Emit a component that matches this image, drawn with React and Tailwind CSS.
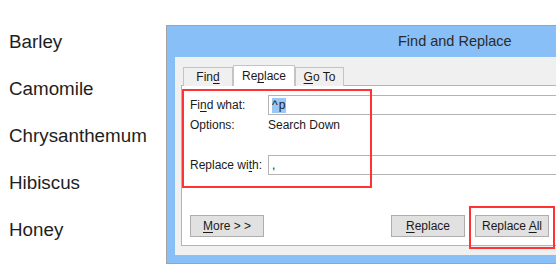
const words = ["Barley", "Camomile", "Chrysanthemum", "Hibiscus", "Honey"];

function Key({ children }) {
  return <span className="underline underline-offset-2">{children}</span>;
}

function Button({ children, className = "" }) {
  return (
    <div
      className={`h-[22px] w-[74px] flex items-center justify-center border border-[#adadad] bg-[#e1e1e1] text-[12px] text-[#1a1a1a] ${className}`}
    >
      <span>{children}</span>
    </div>
  );
}

export default function App() {
  return (
    <div
      className="relative w-[556px] h-[276px] overflow-hidden bg-white flex"
      style={{ fontFamily: '"Liberation Sans", Arial, sans-serif' }}
    >
      {/* word list */}
      <div className="w-[166px] shrink-0 pt-[18px] pl-[9px] text-[18.8px] text-[#1e1e1e]">
        {words.map((w) => (
          <div key={w} className="h-[47px] leading-[47px]">
            {w}
          </div>
        ))}
      </div>

      {/* dialog window */}
      <div className="mt-[25px] h-[239px] w-[440px] shrink-0 border border-[#a3a3a3] bg-[#88bff7] flex flex-col px-[8px] pb-[8px]">
        <div className="h-[31px] shrink-0 flex items-center pl-[223px] text-[14.5px] text-[#2b2b2b]">
          Find and Replace
        </div>

        <div className="flex-1 bg-[#f0f0f0] flex flex-col pt-[8px]">
          {/* tabs */}
          <div className="flex items-end pl-[8px] h-[21px] relative z-10 -mb-px">
            <div className="h-[19px] w-[50px] border border-[#c4c4c4] border-b-0 bg-[#f0f0f0] flex items-center justify-center text-[12px] text-[#1a1a1a]">
              <span>Fin<Key>d</Key></span>
            </div>
            <div className="h-[21px] w-[62px] border border-[#c4c4c4] border-b-0 bg-white flex items-center justify-center text-[12px] text-[#1a1a1a]">
              <span>Re<Key>p</Key>lace</span>
            </div>
            <div className="h-[19px] w-[49px] border border-[#c4c4c4] border-b-0 bg-[#f0f0f0] flex items-center justify-center text-[12px] text-[#1a1a1a]">
              <span><Key>G</Key>o To</span>
            </div>
          </div>

          {/* panel */}
          <div className="ml-[6px] border border-[#b4b4b4] bg-white pl-[8px] pt-[9px] pb-[8px] text-[12px] text-[#1a1a1a]">
            <div className="flex items-center h-[20px]">
              <div className="w-[78px]">
                Fi<Key>n</Key>d what:
              </div>
              <div className="flex-1 h-[20px] border border-[#b4b4b4] flex items-center pl-[3px]">
                <span className="bg-[#9bc8f2] leading-[15px] tracking-[1px]">^p</span>
              </div>
            </div>
            <div className="flex items-center h-[16px] mt-[2px]">
              <div className="w-[78px]">Options:</div>
              <div>Search Down</div>
            </div>
            <div className="flex items-center h-[20px] mt-[22px]">
              <div className="w-[78px]">
                Replace wi<Key>t</Key>h:
              </div>
              <div className="flex-1 h-[20px] border border-[#b4b4b4] flex items-center pl-[3px]">
                ,
              </div>
            </div>
            <div className="flex items-center mt-[40px]">
              <Button>
                <Key>M</Key>ore &gt; &gt;
              </Button>
              <Button className="ml-[127px]">
                <Key>R</Key>eplace
              </Button>
              <Button className="ml-[10px]">
                Replace <Key>A</Key>ll
              </Button>
            </div>
          </div>
        </div>
      </div>

      {/* red annotation boxes */}
      <div className="absolute left-[182px] top-[89px] w-[190px] h-[99px] border-2 border-[#ff3333]" />
      <div className="absolute left-[469px] top-[206px] w-[86px] h-[43px] border-2 border-[#ff3333]" />
    </div>
  );
}
